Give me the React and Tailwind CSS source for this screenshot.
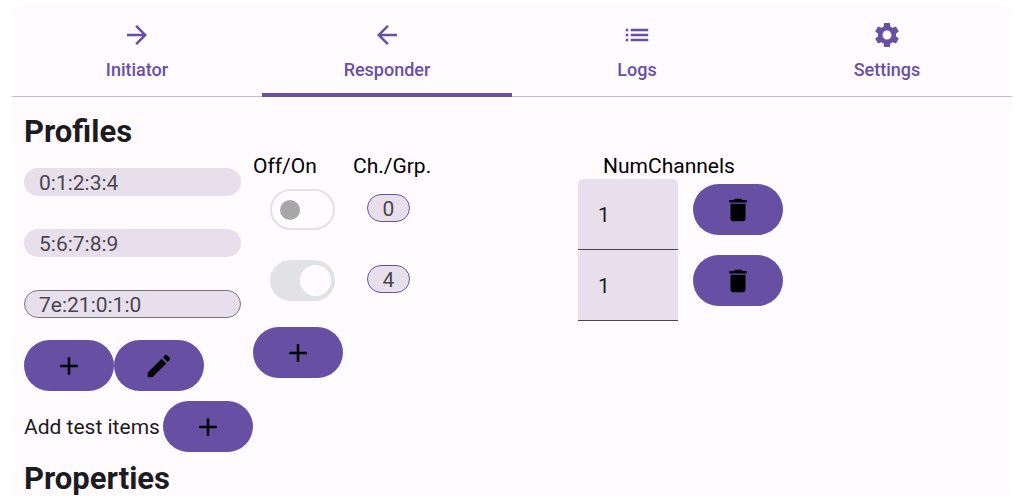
import {
  MdAdd,
  MdArrowBack,
  MdArrowForward,
  MdDelete,
  MdEdit,
  MdList,
  MdSettings,
} from "react-icons/md";

const tabs = [
  { label: "Initiator", Icon: MdArrowForward },
  { label: "Responder", Icon: MdArrowBack, active: true },
  { label: "Logs", Icon: MdList },
  { label: "Settings", Icon: MdSettings },
];

const profiles = [
  { id: "0:1:2:3:4" },
  { id: "5:6:7:8:9" },
  { id: "7e:21:0:1:0", outlined: true },
];

const channels = [
  { group: "0", on: false, count: "1" },
  { group: "4", on: true, count: "1" },
];

function FilledButton({ label, Icon }) {
  return (
    <button
      type="button"
      aria-label={label}
      className="flex h-[51px] w-[90px] shrink-0 items-center justify-center rounded-full bg-[#6750a4] text-black"
    >
      <Icon className="size-[30px]" />
    </button>
  );
}

function Switch({ label, on }) {
  return (
    <input
      type="checkbox"
      role="switch"
      aria-label={label}
      defaultChecked={on}
      disabled
      className="flex h-[41px] w-[65px] appearance-none items-center rounded-full border-2 border-[#e2e1e3] pl-2 before:size-5 before:rounded-full before:bg-[#a8a6a9] checked:justify-end checked:bg-[#e2e1e3] checked:pr-[2px] checked:before:size-[31px] checked:before:bg-[#fffbff]"
    />
  );
}

export default function App() {
  return (
    <div className="flex h-screen flex-col bg-white px-3 py-[5px] font-['Roboto',sans-serif] text-[#1c1b1f]">
      <div className="flex min-h-0 flex-1 flex-col bg-[#fffbff]">
        <nav className="flex shrink-0 border-b border-[#c4bdd0]">
          {tabs.map(({ label, Icon, active }) => (
            <a
              key={label}
              href={`#${label.toLowerCase()}`}
              aria-current={active ? "page" : undefined}
              className={`-mb-px flex h-[92px] flex-1 flex-col items-center gap-2 border-b-4 pt-[15px] text-[#6750a4] ${
                active ? "border-[#6750a4]" : "border-transparent"
              }`}
            >
              <Icon className="size-[30px]" />
              <span className="text-lg leading-6 font-medium">{label}</span>
            </a>
          ))}
        </nav>

        <main className="min-h-0 flex-1 overflow-y-auto px-3 pt-[15px] [scrollbar-width:none]">
          <h1 className="text-[31px] leading-10 font-bold">Profiles</h1>
          <div className="mt-px flex items-start">
            <section aria-label="Profile list" className="w-[229px] shrink-0 pt-[15px]">
              <ul className="flex w-[217px] flex-col gap-[33px]">
                {profiles.map(({ id, outlined }) => (
                  <li key={id} className="flex">
                    <button
                      type="button"
                      className={`h-7 w-full rounded-full border bg-[#e7e0ec] px-[14px] pt-0.5 text-left text-[21px] leading-6 text-[#49454f] ${
                        outlined ? "border-[#79747e]" : "border-transparent"
                      }`}
                    >
                      {id}
                    </button>
                  </li>
                ))}
              </ul>
              <div className="mt-[22px] flex">
                <FilledButton label="Add profile" Icon={MdAdd} />
                <FilledButton label="Edit profile" Icon={MdEdit} />
              </div>
              <div className="mt-[10px] flex w-max items-center">
                <span className="w-[139px] text-[21px] leading-6 whitespace-nowrap">
                  Add test items
                </span>
                <FilledButton label="Add test items" Icon={MdAdd} />
              </div>
            </section>

            <section aria-label="Channels">
              <table className="table-fixed border-collapse text-left">
                <thead>
                  <tr className="h-[26px] text-[21px] leading-6 text-black">
                    <th scope="col" className="w-[100px] p-0 font-normal">Off/On</th>
                    <th scope="col" className="w-[225px] p-0 font-normal">Ch./Grp.</th>
                    <th scope="col" colSpan={2} className="p-0 pl-[25px] font-normal">NumChannels</th>
                  </tr>
                </thead>
                <tbody>
                  {channels.map(({ group, on, count }) => (
                    <tr key={group} className="align-top">
                      <td className="p-0 pt-[10px] pl-[17px]">
                        <Switch label={`Channel group ${group}`} on={on} />
                      </td>
                      <td className="p-0 pt-[15px] pl-[14px]">
                        <button
                          type="button"
                          className="block h-7 w-[43px] rounded-full border border-[#6750a4] bg-[#e7e0ec] pt-0.5 text-[21px] leading-6 text-[#49454f]"
                        >
                          {group}
                        </button>
                      </td>
                      <td className="w-[115px] p-0">
                        <input
                          type="text"
                          inputMode="numeric"
                          aria-label={`NumChannels for group ${group}`}
                          defaultValue={count}
                          className="block h-[71px] w-[100px] rounded-t-[5px] border-b border-[#49454f] bg-[#e7e0ec] px-5 pt-0.5 text-[21px]"
                        />
                      </td>
                      <td className="p-0 pt-[5px]">
                        <FilledButton label={`Delete group ${group}`} Icon={MdDelete} />
                      </td>
                    </tr>
                  ))}
                </tbody>
              </table>
              <div className="mt-[6px]">
                <FilledButton label="Add channel" Icon={MdAdd} />
              </div>
            </section>
          </div>
          <h2 className="mt-[7px] text-[31px] leading-10 font-bold">Properties</h2>
        </main>
      </div>
    </div>
  );
}
